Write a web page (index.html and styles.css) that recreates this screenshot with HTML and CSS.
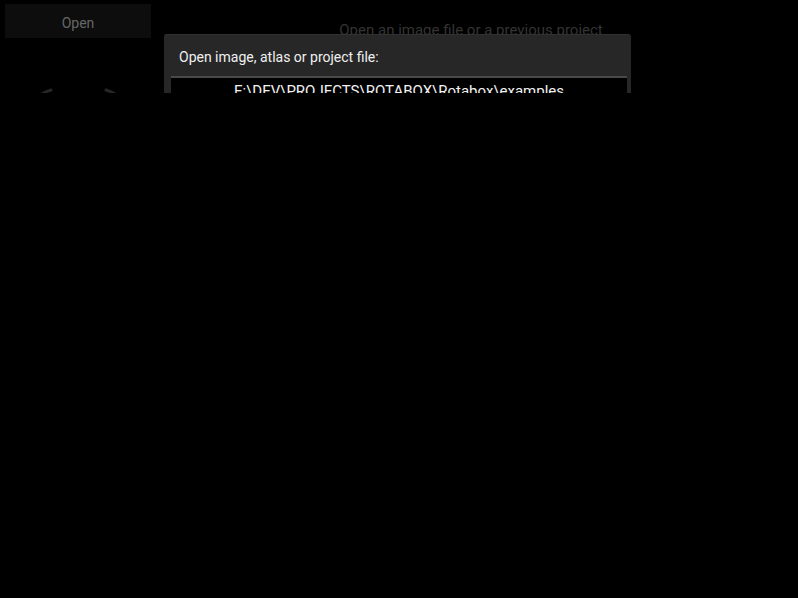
FILE: index.html
```html
<!DOCTYPE html>
<html>
<head>
<meta charset="utf-8">
<link rel="stylesheet" href="styles.css">
</head>
<body>
<div class="viewport">
  <div class="app">
    <aside class="sidebar">
      <button class="open-btn">Open</button>
      <div class="logo">
        <svg width="146" height="120" viewBox="0 0 146 120">
          <path d="M35 57 A44 44 0 0 1 46 52" fill="none" stroke="#262626" stroke-width="3" stroke-linecap="round"/>
          <path d="M101 52 A44 44 0 0 1 112 57" fill="none" stroke="#262626" stroke-width="3" stroke-linecap="round"/>
        </svg>
      </div>
    </aside>
    <main class="main">
      <p class="hint">Open an image file or a previous project</p>
    </main>
  </div>
  <div class="dialog">
    <div class="dialog-title">Open image, atlas or project file:</div>
    <div class="file-list">
      <div class="path">E:\DEV\PROJECTS\ROTABOX\Rotabox\examples</div>
    </div>
  </div>
</div>
</body>
</html>
```

FILE: styles.css
```css
html, body {
  margin: 0;
  padding: 0;
  background: #000;
  font-family: Roboto, "Noto Sans", sans-serif;
}

.viewport {
  position: relative;
  height: 93px;
  overflow: hidden;
}

.app {
  display: flex;
  padding: 4px 0 0 5px;
}

.sidebar {
  width: 146px;
  display: flex;
  flex-direction: column;
}

.open-btn {
  width: 146px;
  height: 34px;
  background: #0d0d0d;
  border: none;
  color: #676767;
  font-family: Roboto, "Noto Sans", sans-serif;
  font-size: 14px;
  padding: 4px 0 0 0;
  margin: 0;
}

.logo {
  margin-top: 0;
}

.logo svg {
  display: block;
}

.main {
  flex: 1;
  display: flex;
  justify-content: center;
}

.hint {
  margin: 17px 0 0 -7px;
  color: #343434;
  font-size: 15px;
}

.dialog {
  position: absolute;
  left: 164px;
  top: 34px;
  width: 467px;
  height: 400px;
  background: #272727;
  border-top: 1px solid #303030;
  border-radius: 3px 3px 0 0;
  box-sizing: border-box;
  padding: 0 4px 0 7px;
}

.dialog-title {
  color: #f0f0f0;
  font-size: 14px;
  padding: 14px 0 0 8px;
  height: 27px;
}

.file-list {
  background: #000;
  border-top: 2px solid #4a4a4a;
  height: 300px;
}

.path {
  color: #f2f2f2;
  font-size: 15px;
  text-align: center;
  padding-top: 4px;
}
```
